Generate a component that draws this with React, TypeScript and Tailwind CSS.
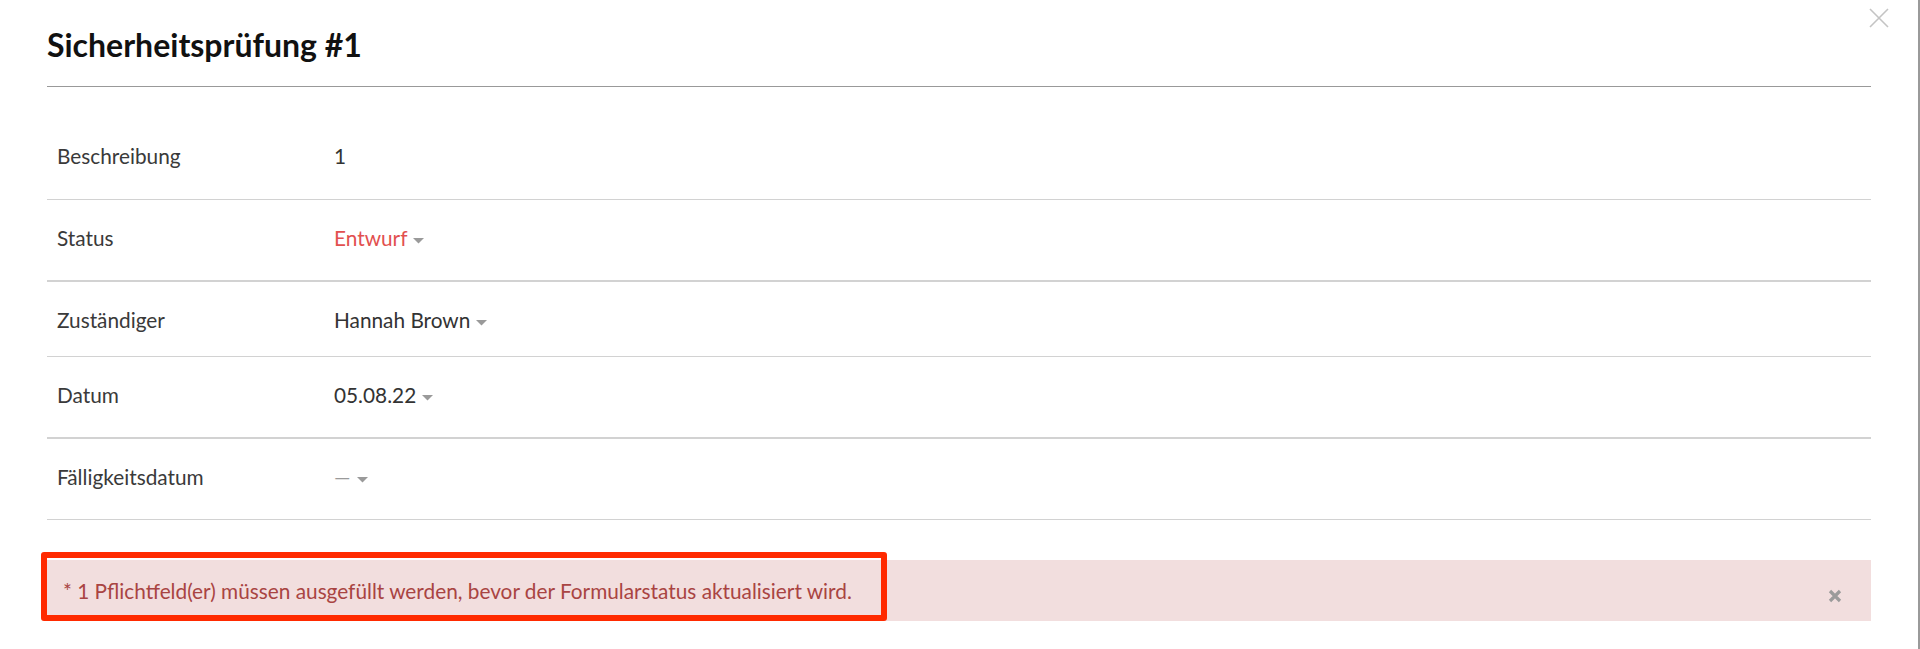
import React from "react";

const Caret = () => (
  <svg width="11" height="6" viewBox="0 0 11 6" className="ml-[6px] mb-[6px] shrink-0">
    <path d="M0 0 L11 0 L5.5 5.5 Z" fill="#9a9a9a" />
  </svg>
);

type RowProps = {
  label: string;
  children: React.ReactNode;
  h: string;
  border: string;
};

const Row = ({ label, children, h, border }: RowProps) => (
  <div className={`flex items-start pl-[10px] pt-[26px] border-[#d2d2d2] ${h} ${border}`}>
    <div className="w-[277px] text-[20.8px] leading-[24px] text-[#3a3a3a]">{label}</div>
    <div className="flex items-end text-[20.8px] leading-[24px] text-[#333]">{children}</div>
  </div>
);

export default function App() {
  return (
    <div
      className="relative w-[1920px] h-[649px] bg-white border-r-2 border-[#9a9a9a] pl-[47px] pr-[47px] overflow-hidden"
      style={{ fontFamily: "Lato, 'Open Sans', sans-serif" }}
    >
      <div className="absolute top-[8px] right-[29px] w-[20px] h-[20px]">
        <svg width="20" height="20" viewBox="0 0 20 20">
          <path d="M1 1 L19 19 M19 1 L1 19" stroke="#c4c4c4" strokeWidth="1.6" />
        </svg>
      </div>

      <div className="pt-[26px] pb-[22px] border-b border-[#999]">
        <h1 className="text-[32px] leading-[38px] font-bold text-[#111]">Sicherheitsprüfung #1</h1>
      </div>

      <div className="mt-[31px]">
        <Row label="Beschreibung" h="h-[82px]" border="border-b">
          <span>1</span>
        </Row>
        <Row label="Status" h="h-[82px]" border="border-b-2">
          <span className="text-[#e2504f]">Entwurf</span>
          <Caret />
        </Row>
        <Row label="Zuständiger" h="h-[75px]" border="border-b">
          <span>Hannah Brown</span>
          <Caret />
        </Row>
        <Row label="Datum" h="h-[82px]" border="border-b-2">
          <span>05.08.22</span>
          <Caret />
        </Row>
        <Row label="Fälligkeitsdatum" h="h-[81px]" border="border-b">
          <span className="text-[#9a9a9a]">—</span>
          <Caret />
        </Row>
      </div>

      <div className="mt-[40px] h-[61px] bg-[#f2dede] flex items-start justify-between pl-[16px] pr-[29px] pt-[20px]">
        <span className="text-[20.8px] leading-[22px] text-[#a94442]">
          * 1 Pflichtfeld(er) müssen ausgefüllt werden, bevor der Formularstatus aktualisiert wird.
        </span>
        <svg width="14" height="14" viewBox="0 0 14 14" className="mt-[9px]">
          <path d="M2 2 L12 12 M12 2 L2 12" stroke="#9b9b9b" strokeWidth="3.2" strokeLinecap="butt" />
        </svg>
      </div>

      <div className="absolute left-[41px] top-[552px] w-[846px] h-[69px] border-[6px] border-[#ff2a00] rounded-[3px] pointer-events-none" />
    </div>
  );
}
